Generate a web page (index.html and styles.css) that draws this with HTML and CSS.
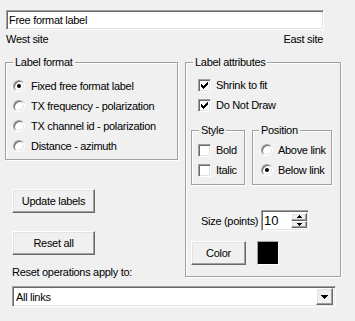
FILE: index.html
```html
<!DOCTYPE html>
<html lang="en">
<head>
  <meta charset="UTF-8">
  <title>Label settings</title>
  <link rel="stylesheet" href="styles.css">
</head>
<body>
  <div class="dialog">
    <div class="name-input sunken">Free format label</div>
    <div class="sites">
      <span>West site</span>
      <span>East site</span>
    </div>

    <div class="columns">
      <div class="left-col">
        <div class="group format-group">
          <div class="group-title">Label format</div>
          <div class="options">
            <div class="option"><span class="radio checked"></span>Fixed free format label</div>
            <div class="option"><span class="radio"></span>TX frequency - polarization</div>
            <div class="option"><span class="radio"></span>TX channel id - polarization</div>
            <div class="option"><span class="radio"></span>Distance - azimuth</div>
          </div>
        </div>

        <div class="btn update-btn">Update labels</div>
        <div class="btn reset-btn">Reset all</div>
        <div class="reset-note">Reset operations apply to:</div>
      </div>

      <div class="group attr-group">
        <div class="group-title">Label attributes</div>
        <div class="attr-checks">
          <div class="option">
            <span class="check sunken">
              <svg width="11" height="11" viewBox="0 0 11 11" shape-rendering="crispEdges"><path d="M8 2h1v1h-1z M7 3h2v1h-2z M2 4h1v1h-1z M6 4h3v1h-3z M2 5h2v1h-2z M5 5h3v1h-3z M2 6h5v1h-5z M3 7h3v1h-3z M4 8h1v1h-1z" fill="#000"/></svg>
            </span>Shrink to fit
          </div>
          <div class="option">
            <span class="check sunken">
              <svg width="11" height="11" viewBox="0 0 11 11" shape-rendering="crispEdges"><path d="M8 2h1v1h-1z M7 3h2v1h-2z M2 4h1v1h-1z M6 4h3v1h-3z M2 5h2v1h-2z M5 5h3v1h-3z M2 6h5v1h-5z M3 7h3v1h-3z M4 8h1v1h-1z" fill="#000"/></svg>
            </span>Do Not Draw
          </div>
        </div>

        <div class="sub-groups">
          <div class="group style-group">
            <div class="group-title">Style</div>
            <div class="sub-options">
              <div class="option"><span class="check sunken"></span>Bold</div>
              <div class="option"><span class="check sunken"></span>Italic</div>
            </div>
          </div>
          <div class="group position-group">
            <div class="group-title">Position</div>
            <div class="sub-options">
              <div class="option"><span class="radio"></span>Above link</div>
              <div class="option"><span class="radio checked"></span>Below link</div>
            </div>
          </div>
        </div>

        <div class="size-row">
          <span class="size-label">Size (points)</span>
          <div class="spin sunken">
            <span class="spin-value">10</span>
            <div class="spin-btns">
              <span class="spin-btn raised">
                <svg width="5" height="3" viewBox="0 0 5 3" shape-rendering="crispEdges"><path d="M2 0h1v1h-1z M1 1h3v1h-3z M0 2h5v1h-5z" fill="#000"/></svg>
              </span>
              <span class="spin-btn raised">
                <svg width="5" height="3" viewBox="0 0 5 3" shape-rendering="crispEdges"><path d="M0 0h5v1h-5z M1 1h3v1h-3z M2 2h1v1h-1z" fill="#000"/></svg>
              </span>
            </div>
          </div>
        </div>

        <div class="color-row">
          <div class="btn color-btn">Color</div>
          <div class="swatch"></div>
        </div>
      </div>
    </div>

    <div class="combo sunken">
      <span class="combo-value">All links</span>
      <span class="combo-btn raised">
        <svg width="7" height="4" viewBox="0 0 7 4" shape-rendering="crispEdges"><path d="M0 0h7v1h-7z M1 1h5v1h-5z M2 2h3v1h-3z M3 3h1v1h-1z" fill="#000"/></svg>
      </span>
    </div>
  </div>
</body>
</html>
```

FILE: styles.css
```css
body {
  margin: 0;
  background: #f0f0f0;
  color: #000;
  font-family: "Liberation Sans", Arial, sans-serif;
  font-size: 11px;
  letter-spacing: -0.3px;
}

.dialog {
  padding: 10px 0 0 5px;
  width: 340px;
}

.sunken {
  box-sizing: border-box;
  background: #fff;
  border: 1px solid;
  border-color: #a0a0a0 #fff #fff #a0a0a0;
  box-shadow: inset 1px 1px 0 #696969, inset -1px -1px 0 #e3e3e3;
}

.raised,
.btn {
  box-sizing: border-box;
  background: #f0f0f0;
  border: 1px solid;
  border-color: #fff #696969 #696969 #fff;
  box-shadow: inset -1px -1px 0 #a0a0a0, inset 1px 1px 0 #e3e3e3;
}

.name-input {
  margin-left: 1px;
  width: 318px;
  height: 20px;
  padding-left: 2px;
  line-height: 18px;
}

.sites {
  display: flex;
  justify-content: space-between;
  width: 317px;
  margin: 3px 0 0 1px;
  line-height: 13px;
}

.columns {
  display: flex;
  margin-top: 16px;
}

.left-col {
  width: 173px;
}

.group {
  box-sizing: border-box;
  border: 1px solid #a0a0a0;
  box-shadow: inset 1px 1px 0 #fff, 1px 1px 0 #fff;
}

.group-title {
  display: table;
  margin: -7px 0 0 7px;
  padding: 0 2px;
  line-height: 13px;
  background: #f0f0f0;
}

.format-group {
  height: 98px;
}

.options {
  margin-top: 7px;
  padding-left: 7px;
}

.option {
  display: flex;
  align-items: center;
  height: 20px;
  gap: 6px;
}

.radio {
  flex: none;
  box-sizing: border-box;
  width: 12px;
  height: 12px;
  border-radius: 50%;
  background: #fff;
  border: 1px solid;
  border-color: #a0a0a0 #fff #fff #a0a0a0;
  box-shadow: inset 1px 1px 0 #696969, inset -1px -1px 0 #e3e3e3;
  display: flex;
  align-items: center;
  justify-content: center;
}

.radio.checked::after {
  content: "";
  width: 4px;
  height: 4px;
  border-radius: 50%;
  background: #000;
}

.check {
  flex: none;
  width: 13px;
  height: 13px;
  display: flex;
}

.btn {
  display: flex;
  align-items: center;
  justify-content: center;
  height: 24px;
}

.update-btn,
.reset-btn {
  width: 83px;
  margin-left: 7px;
}

.update-btn {
  margin-top: 29px;
}

.reset-btn {
  margin-top: 18px;
}

.reset-note {
  margin: 11px 0 0 7px;
  line-height: 13px;
}

.attr-group {
  width: 156px;
  height: 215px;
  margin-left: 7px;
}

.attr-checks {
  margin-top: 6px;
  padding-left: 12px;
}

.attr-checks .option {
  gap: 5px;
}

.sub-groups {
  display: flex;
  gap: 7px;
  margin: 15px 0 0 5px;
}

.style-group {
  width: 54px;
  height: 55px;
}

.position-group {
  width: 80px;
  height: 55px;
}

.position-group .group-title {
  margin-left: 6px;
}

.sub-options {
  margin-top: 3px;
  padding-left: 6px;
}

.style-group .option {
  gap: 5px;
}

.position-group .sub-options {
  padding-left: 8px;
}

.position-group .option {
  gap: 5px;
}

.size-row {
  display: flex;
  align-items: center;
  gap: 4px;
  margin: 25px 0 0 15px;
}

.size-label {
  flex: none;
  width: 56px;
  white-space: nowrap;
}

.spin {
  display: flex;
  width: 48px;
  height: 21px;
  padding: 2px 1px 2px 2px;
}

.spin-value {
  flex: 1;
  line-height: 16px;
  font-size: 13px;
  letter-spacing: 0;
}

.spin-btns {
  display: flex;
  flex-direction: column;
  width: 16px;
}

.spin-btn {
  flex: 1;
  display: flex;
  align-items: center;
  justify-content: center;
}

.color-row {
  display: flex;
  gap: 11px;
  margin: 10px 0 0 5px;
}

.color-btn {
  width: 55px;
}

.swatch {
  box-sizing: border-box;
  width: 22px;
  height: 24px;
  background: #000;
  border: 1px solid;
  border-color: #a0a0a0 #fff #fff #a0a0a0;
}

.combo {
  display: flex;
  align-items: center;
  width: 324px;
  height: 21px;
  margin: 7px 0 0 7px;
  padding: 2px;
}

.combo-value {
  flex: 1;
  padding-left: 1px;
}

.combo-btn {
  width: 17px;
  height: 17px;
  display: flex;
  align-items: center;
  justify-content: center;
}
```
